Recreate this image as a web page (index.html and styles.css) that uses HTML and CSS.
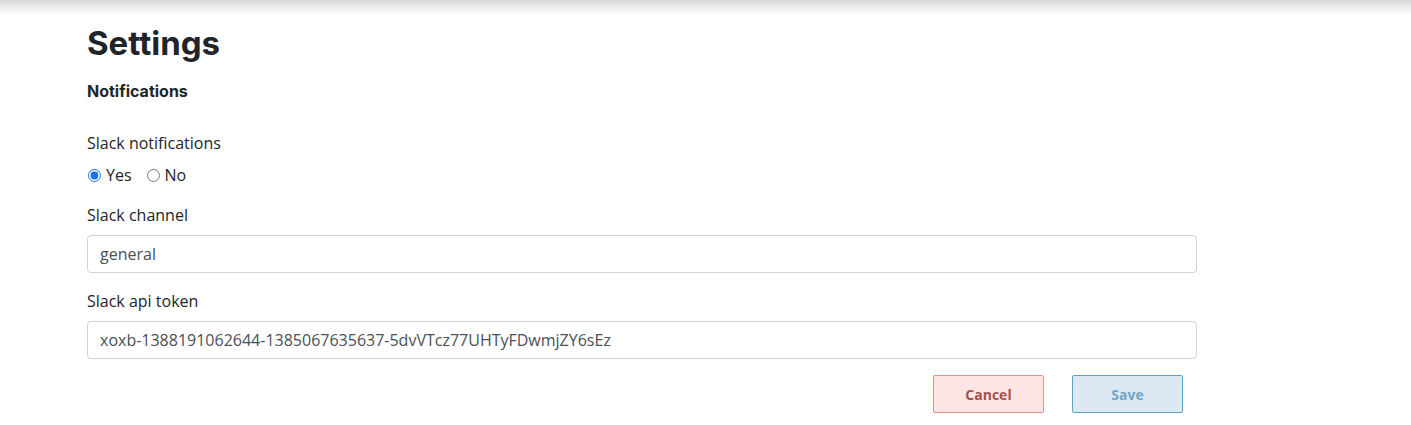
FILE: index.html
```html
<!DOCTYPE html>
<html>
<head>
<meta charset="utf-8">
<link rel="stylesheet" href="styles.css">
</head>
<body>
<div class="topbar"></div>
<main class="page">
  <h1 class="title">Settings</h1>
  <h2 class="section">Notifications</h2>
  <form class="form">
    <div class="group">
      <label class="label">Slack notifications</label>
      <div class="radios">
        <label class="radio"><input type="radio" name="slack" checked> Yes</label>
        <label class="radio"><input type="radio" name="slack"> No</label>
      </div>
    </div>
    <div class="group">
      <label class="label">Slack channel</label>
      <input class="input" type="text" value="general">
    </div>
    <div class="group">
      <label class="label">Slack api token</label>
      <input class="input" type="text" value="xoxb-1388191062644-1385067635637-5dvVTcz77UHTyFDwmjZY6sEz">
    </div>
    <div class="actions">
      <button type="button" class="btn btn-cancel">Cancel</button>
      <button type="button" class="btn btn-save">Save</button>
    </div>
  </form>
</main>
</body>
</html>
```

FILE: styles.css
```css
* { box-sizing: border-box; }
html, body { margin: 0; padding: 0; background: #fff; }
body { font-family: "Open Sans", sans-serif; color: #212529; font-size: 16px; }

.topbar {
  height: 16px;
  background: linear-gradient(to bottom, #d6d6d6 0%, #ececec 45%, #fbfbfb 85%, #ffffff 100%);
}

.page {
  padding-left: 87px;
  width: 1197px;
}

.title {
  font-family: Inter, sans-serif;
  font-weight: 700;
  font-size: 33px;
  line-height: 40px;
  margin: 7px 0 0 0;
  color: #212529;
}

.section {
  font-family: Inter, sans-serif;
  font-weight: 700;
  font-size: 16px;
  line-height: 19px;
  margin: 19px 0 0 0;
  color: #212529;
}

.form { margin-top: 30px; }

.group { margin-bottom: 16px; }

.label {
  display: block;
  line-height: 24px;
  margin-bottom: 8px;
}

.radios {
  display: flex;
  gap: 14px;
  line-height: 24px;
}

.radio {
  display: flex;
  align-items: center;
  gap: 4px;
}

.radio input {
  margin: 0 1px 0 1px;
  width: 13px;
  height: 13px;
  accent-color: #1a73e8;
}

.input {
  display: block;
  width: 100%;
  height: 38px;
  padding: 6px 12px;
  font-family: "Open Sans", sans-serif;
  font-size: 16px;
  line-height: 24px;
  color: #495057;
  border: 1px solid #ced4da;
  border-radius: 4px;
  background: #fff;
}

.actions {
  display: flex;
  justify-content: flex-end;
  gap: 28px;
  padding-right: 14px;
}

.btn {
  width: 111px;
  height: 38px;
  font-family: "Open Sans", sans-serif;
  font-weight: 700;
  font-size: 14px;
  border-radius: 2px;
  border: 1px solid;
}

.btn-cancel {
  background: #fde5e5;
  border-color: #f08a8a;
  color: #a5524f;
}

.btn-save {
  background: #dde9f2;
  border-color: #5ea2c6;
  color: #71a6c7;
}
```
